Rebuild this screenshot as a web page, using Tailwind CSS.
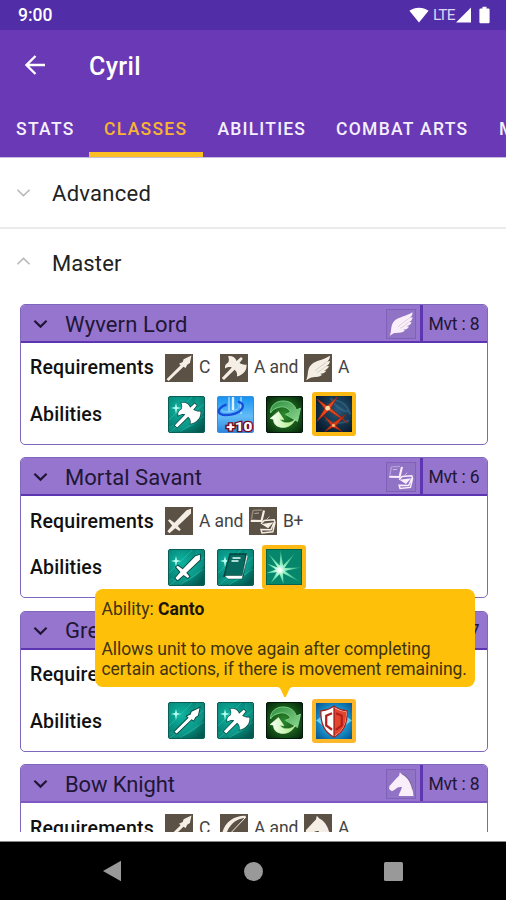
<!DOCTYPE html>
<html lang="en">
<head>
<meta charset="utf-8">
<title>Cyril</title>
<script src="https://cdn.jsdelivr.net/npm/@tailwindcss/browser@4"></script>
</head>
<body class="w-[506px] h-[900px] overflow-hidden bg-white font-['Roboto',sans-serif] text-[#151515]">
<svg class="absolute h-0 w-0">
  <defs>
    <radialGradient id="teal" cx=".35" cy=".35" r=".8"><stop offset="0" stop-color="#0fb5a0"/><stop offset=".6" stop-color="#07897c"/><stop offset="1" stop-color="#045950"/></radialGradient>
    <radialGradient id="green" cx=".5" cy=".5" r=".7"><stop offset="0" stop-color="#2c8a2c"/><stop offset=".6" stop-color="#155218"/><stop offset="1" stop-color="#04200a"/></radialGradient>
    <linearGradient id="blue" x1="0" y1="0" x2="0" y2="1"><stop offset="0" stop-color="#1592f2"/><stop offset=".55" stop-color="#63bcf8"/><stop offset="1" stop-color="#2c85dc"/></linearGradient>
    <radialGradient id="navy" cx=".6" cy=".4" r=".7"><stop offset="0" stop-color="#275878"/><stop offset="1" stop-color="#071a2e"/></radialGradient>
    <radialGradient id="cyan" cx=".5" cy=".5" r=".65"><stop offset="0" stop-color="#5bd8ff"/><stop offset=".65" stop-color="#1489c4"/><stop offset="1" stop-color="#0a5a94"/></radialGradient>
    <radialGradient id="glow" cx=".38" cy=".58" r=".6"><stop offset="0" stop-color="#ffffff"/><stop offset=".3" stop-color="#8df0c0"/><stop offset="1" stop-color="#23a980"/></radialGradient>
    <linearGradient id="arrowA" x1="0" y1="0" x2="1" y2="1"><stop offset="0" stop-color="#2d8c3c"/><stop offset="1" stop-color="#8fd893"/></linearGradient>
    <linearGradient id="arrowB" x1="0" y1="0" x2="1" y2="0"><stop offset="0" stop-color="#ffffff"/><stop offset="1" stop-color="#a5ef79"/></linearGradient>
    <symbol id="lance" viewBox="0 0 28 28"><path d="M1.5 25.2 L15.6 11.2 L14 9.7 L17.7 7.9 L18.6 5.2 L26.5 1.4 L24.9 9 L22.2 10.7 L20.6 14 L18.5 12.7 L3.7 27 Z"/></symbol>
    <symbol id="axe" viewBox="0 0 28 28"><path d="M8 2.5 C12 1 15.5 3.5 16.5 7 L21 3 L22.8 4.8 L19.5 9 C22 10.5 24.5 11 26.5 10.5 C27 16 24 20.5 17 22.5 C17.5 19.5 16.5 17 14.6 15.8 L4 26 L1.8 24 L11.8 13.4 C10 12.6 8 12.8 5 14.5 C4.8 11.5 5.5 10 8 8.8 C9.4 7 9 4 8 2.5 Z"/></symbol>
    <symbol id="wing" viewBox="0 0 28 28"><path d="M2.2 26.3 C4.8 21 2.6 14.8 7.5 10.4 C12 6.5 19 6.2 25.8 1.8 C26.2 4 25.3 6 23.2 7.5 L26 7 C25.8 9.8 24.2 11.3 21.8 12.2 L25 12 C24.2 14.7 22 16 19.8 16.4 L22.3 16.8 C21 19 18.5 20 16.3 19.8 L18 21 C14.5 23.8 9.8 22.6 6.5 23.7 C5 24.3 3.7 25.4 2.2 26.3 Z"/><path d="M11 17 C15 13 19 11 23 7.6 M13 18.5 C16 17 19 15 21.6 12.3" fill="none" stroke="#62564a" stroke-width=".6" opacity=".35"/></symbol>
    <symbol id="sword" viewBox="0 0 28 28"><path d="M26 1.8 L26 6.5 L12.8 19 L15.8 22.6 L14.3 24.1 L10.2 21.2 L4.5 26.3 L2.3 24.2 L7.2 18.4 L3 13.6 L4.6 12.2 L9.4 15.8 L21.6 3.2 Z"/></symbol>
    <symbol id="books" viewBox="0 0 28 28"><g fill="none" stroke="currentColor" stroke-width="1.5"><path d="M4 3.5 L13 3 M4 3.5 L2.5 12" stroke-opacity=".35"/><path d="M1.8 13.8 L12.5 14 L15 3.5" stroke-width="2.2"/><path d="M12 16.8 L15.2 13.5 L25.2 12.8 L26 15.5 L23.8 24.8 L13 26 L12 22.5 L22 22.8 L25 15.5"/><path d="M14.5 17.4 L22.5 16.3 L19 20.3 Z" fill="currentColor"/><path d="M5.5 6.5 L10 6 M17.5 12.5 L20.5 9.5" stroke-width="1" stroke-opacity=".6"/></g></symbol>
    <symbol id="bow" viewBox="0 0 28 28"><path d="M26 3 L4 26" fill="none" stroke="currentColor" stroke-width="1"/><path d="M1.5 26 C1.2 12 11 1.5 25.5 1.8 L26 3.8 C15 4.8 7 12 4.8 26 Z"/></symbol>
    <symbol id="horse" viewBox="0 0 28 28"><path d="M12 5.5 L12.8 1.8 L15.3 4.5 C21 7 24 13 26 20 L27 26.5 L11.5 26.5 C12.4 22.8 14.2 20.8 15 17.2 C12 16.8 10 17.6 8.2 19.5 L4.6 21.4 L1.6 19.2 L2 16 C5 13 7.7 9.6 12 5.5 Z"/><path d="M16.5 4 C22 7.5 24.5 13 26 20" fill="none" stroke="#6b5b62" stroke-width=".8" opacity=".7"/></symbol>
    <symbol id="tealBase" viewBox="0 0 37 37"><rect x=".5" y=".5" width="36" height="36" rx="1.5" fill="url(#teal)" stroke="#075f57"/><path d="M1 30 C16 27 27 14 28 1 L36 1 L36 16 C31 27 20 34 8 36 L1 36 Z" fill="#19c5ad" opacity=".3"/><path d="M2 36 L36 8 M12 36 L36 20 M1 24 L24 1" stroke="#50e3cf" stroke-width="1" opacity=".3"/><path d="M8 7 L9 11 L13 12 L9 13 L8 18 L7 13 L3 12 L7 11 Z" fill="#b9fff2"/></symbol>
    <symbol id="aAxe" viewBox="0 0 37 37"><use href="#tealBase"/><use href="#axe" x="5" y="4" width="29" height="30" fill="#fff" stroke="#064b45" stroke-width="1.4" paint-order="stroke"/></symbol>
    <symbol id="aLance" viewBox="0 0 37 37"><use href="#tealBase"/><use href="#lance" x="5" y="4" width="28" height="29" fill="#fff" stroke="#064b45" stroke-width="1.8" paint-order="stroke"/></symbol>
    <symbol id="aSword" viewBox="0 0 37 37"><use href="#tealBase"/><use href="#sword" x="5" y="4" width="29" height="29" fill="#fff" stroke="#064b45" stroke-width="1.8" paint-order="stroke"/></symbol>
    <symbol id="aBook" viewBox="0 0 37 37"><use href="#tealBase"/><path d="M13 5 L29 5 L26 27 L7 27 Z" fill="#08695f" stroke="#03443e" stroke-width="1.4"/><path d="M8 27.5 L11 30 L25 30 L31 7 L29.5 5.5 L25.2 26.5 L9 26.5 Z" fill="#fff" stroke="#03443e" stroke-width=".5"/><path d="M15.5 9 H23.5 M14.5 12 H21.5" stroke="#e6fffa" stroke-width="1.7"/></symbol>
    <symbol id="aUp" viewBox="0 0 37 37"><rect x=".5" y=".5" width="36" height="36" rx="1.5" fill="url(#blue)" stroke="#3a8fdb"/><path d="M12 1 V16 M24 1 V18" stroke="#d9f2ff" stroke-width="2" opacity=".5"/><path d="M16 1 V14" stroke="#fff" stroke-width="2.4" opacity=".85"/><path d="M21 5.6 C30 7.5 26 16.5 14 18.6 C5 20 -1 17.5 3 12.5 C4.5 10.5 7 9.3 9.5 8.5" fill="none" stroke="#154fdc" stroke-width="2.4"/><path d="M20 7.8 C24.5 9 22 14 14 15.5 C8 16.5 4 15.5 5 13" fill="none" stroke="#88d0ff" stroke-width="1"/><text x="9.5" y="34.5" font-size="13" font-weight="900" fill="#fff" stroke="#780b1c" stroke-width="2.6" paint-order="stroke" textLength="26" lengthAdjust="spacingAndGlyphs">+10</text></symbol>
    <symbol id="aCanto" viewBox="0 0 37 37"><rect x=".5" y=".5" width="36" height="36" rx="1.5" fill="url(#green)" stroke="#03180a"/><path d="M4.5 17 C4 9 11 4.5 18 5 C25 5.4 29 9 30.2 14 L34.5 12.2 L31.5 25.5 L19.5 18.3 L24.6 16.2 C22 11.5 17.5 9.8 12.5 11.4 C9 12.3 6 14.2 4.5 17 Z" fill="url(#arrowA)" stroke="#7ed78a" stroke-width=".9"/><path d="M4 22.5 L12.5 15.5 L18 23.8 L13.7 23.2 C16.7 27.5 23 28.4 29 23.7 C25.5 31 17 33.8 10.2 29.5 C8.5 28 7.5 26 7.3 23.2 Z" fill="url(#arrowB)" stroke="#e5ffd8" stroke-width=".5"/></symbol>
    <symbol id="aCross" viewBox="0 0 37 37"><rect width="37" height="37" fill="url(#navy)"/><path d="M17 4 C27 5 33 11 35 19 M10 24 C17 28 26 29 34 25 M15 2 C20 11 27 16 35 16" fill="none" stroke="#3b7395" stroke-width="2" opacity=".5"/><path d="M1 3 L11.5 10.2 L22 1 L15 12.5 L33 28 L13 15 L1 26 L9 13 Z" fill="#e84a1c" stroke="#9c2412" stroke-width=".8"/><path d="M8 20 L17.5 28 L31 18.5 L20.5 30.5 L27 36.5 L17.5 32 L9 36.5 L15.3 30 Z" fill="#dc3915" stroke="#83200f" stroke-width=".7"/><circle cx="12" cy="12.5" r="2.4" fill="#ffd8a0"/><circle cx="18" cy="30.2" r="1.6" fill="#ffb070"/></symbol>
    <symbol id="aStar" viewBox="0 0 37 37"><rect width="37" height="37" fill="#06866a"/><path d="M0 0 H37 V37 H0 Z" fill="none" stroke="#056450" stroke-width="2"/><path d="M12 19 L2 4 L14 17 L15 1 L17.5 17 L30 4 L19 19.5 L36 19 L19.5 22.5 L35 34 L17.5 25 L18 36 L14 26 L5 35 L11 24 L0 25 L10 21 L1 15 Z" fill="url(#glow)"/><circle cx="14.5" cy="22" r="2.5" fill="#fff" opacity=".75"/></symbol>
    <symbol id="aShield" viewBox="0 0 37 37"><rect width="37" height="37" fill="url(#cyan)"/><path d="M0 18 L8 12 V24 Z M37 18 L29 12 V24 Z" fill="#8cecff" opacity=".7"/><path d="M18.5 3 C21.5 5.5 26 7.4 32 8 C32.5 21 29 30 18.5 35 C8 30 4.5 21 5 8 C11 7.4 15.5 5.5 18.5 3 Z" fill="#fff" stroke="#a2231f" stroke-width="1.3"/><path d="M18.5 4.5 C21.5 6.5 26 8.4 31 9 C31.3 21 28 29 18.5 34 Z" fill="#e6452d"/><path d="M16.5 10.5 L10.5 13 V23 L16.5 27.5 M20.5 10.5 L26.5 13 V23 L20.5 27.5" fill="none" stroke="#b3201b" stroke-width="2.3"/><path d="M18.5 4 V34" stroke="#8c1714" stroke-width="1.2"/></symbol>
    <symbol id="chev" viewBox="0 0 16 10"><path d="M1.5 1.5 L8 7.8 L14.5 1.5" fill="none" stroke="currentColor"/></symbol>
  </defs>
</svg>

<div class="flex h-full w-full flex-col">
  <header class="shrink-0">
    <div class="flex h-[30px] items-center bg-[#512da8] pl-[18px] pr-[16px] text-white">
      <span class="mt-px text-[17.5px] leading-none font-medium">9:00</span>
      <svg class="ml-auto h-[16px] w-[20px]" viewBox="0 0 20 16"><path d="M.4 3.8 C6 -.4 14 -.4 19.6 3.8 L10 15.6 Z" fill="#fff"/></svg>
      <span class="ml-[4px] mt-px w-[23px] text-[15.5px] leading-none tracking-[-0.9px] text-[#ddd3f5]">LTE</span>
      <svg class="h-[16px] w-[15px]" viewBox="0 0 15 16"><path d="M15 .5 V15.5 H0 Z" fill="#fff"/></svg>
      <svg class="ml-[8px] h-[18px] w-[11px]" viewBox="0 0 11 18"><path d="M3.5 .8 H7.5 V2.5 H9.5 Q10.6 2.5 10.6 3.8 V16 Q10.6 17.2 9.5 17.2 H1.5 Q.4 17.2 .4 16 V3.8 Q.4 2.5 1.5 2.5 H3.5 Z" fill="#fff"/></svg>
    </div>
    <div class="bg-[#6a39b5] text-white">
      <div class="flex h-[71px] items-center pl-[25px]">
        <svg class="mt-[-2px] h-[20px] w-[20px]" viewBox="0 0 20 20"><path d="M20 10 H2 M10.5 1 L1.5 10 L10.5 19" fill="none" stroke="#fff" stroke-width="2.3"/></svg>
        <h1 class="ml-[44px] mt-px text-[25px] leading-none font-medium tracking-[0.4px]">Cyril</h1>
      </div>
      <nav class="flex h-[56px] overflow-hidden text-[17.5px] leading-[56px] font-medium tracking-[1.3px] whitespace-nowrap text-[#f5effd]">
        <span class="w-[89px] shrink-0 pl-[16px]">STATS</span>
        <span class="w-[113.5px] shrink-0 border-b-[5px] border-[#fbbf24] pl-[15px] text-[#f7b531]">CLASSES</span>
        <span class="w-[118.5px] shrink-0 pl-[15px] tracking-[1.2px]">ABILITIES</span>
        <span class="w-[163px] shrink-0 pl-[15px]">COMBAT ARTS</span>
        <span class="w-[80px] shrink-0 pl-[15px]">M</span>
      </nav>
    </div>
  </header>

  <main class="relative h-[675px] shrink-0 overflow-hidden border-t border-[#c9bddf]">
    <div class="flex h-[71px] items-center border-b-2 border-[#ebebeb] pb-px pl-[16px]">
      <svg class="mt-[2px] h-[10px] w-[15px] text-[#b8b8b8]" stroke-width="1.7"><use href="#chev"/></svg>
      <span class="ml-[21px] mt-[4px] text-[22px] leading-none tracking-[0.28px] text-[#222]">Advanced</span>
    </div>
    <div class="flex h-[75px] items-center pl-[16px]">
      <svg class="mt-[-11px] h-[10px] w-[15px] rotate-180 text-[#b8b8b8]" stroke-width="1.7"><use href="#chev"/></svg>
      <span class="ml-[21px] mt-[-5px] text-[22px] leading-none tracking-[0.1px] text-[#222]">Master</span>
    </div>

    <div class="flex flex-col gap-[12.4px] pr-[18.5px] pl-[20px]">
      <section class="h-[141px] shrink-0 overflow-hidden rounded-[5px] border-[1.5px] border-[#7e67bd]">
        <div class="flex h-[38px] items-center border-b-2 border-[#5e35b1] bg-[#9575cd] pl-[12px] text-[#211636]">
          <svg class="mt-[2px] h-[10px] w-[15px]" stroke-width="2.3"><use href="#chev"/></svg>
          <h2 class="mt-[3px] ml-[17px] text-[22px] leading-none tracking-[0.12px]">Wyvern Lord</h2>
          <svg class="ml-auto mt-px h-[30px] w-[30px] border border-[#8060b8] bg-[#9073c4] p-[0.5px]" fill="#fbeefb"><use href="#wing"/></svg>
          <span class="ml-[4px] h-full w-[3px] bg-[#5e35b1]"></span>
          <span class="mt-[2px] w-[64px] pl-[6px] text-[17.5px] tracking-[-0.2px]">Mvt : 8</span>
        </div>
        <div class="flex h-[48px] items-center pt-px pl-[9px] text-[17.5px] text-[#444]">
          <b class="mt-px w-[135px] text-[19.5px] font-medium tracking-[0.2px] text-[#111]">Requirements</b>
          <svg class="h-[28px] w-[28px] bg-[#5c5145]" fill="#f5eee5"><use href="#lance"/></svg><span class="w-[27px] pl-[6px]">C</span>
          <svg class="h-[28px] w-[28px] bg-[#5c5145]" fill="#f5eee5"><use href="#axe"/></svg><span class="w-[56px] pl-[6px] tracking-[-0.1px]">A and</span>
          <svg class="h-[28px] w-[28px] bg-[#5c5145]" fill="#f5eee5"><use href="#wing"/></svg><span class="pl-[6px]">A</span>
        </div>
        <div class="flex h-[46px] items-center pl-[9px]">
          <b class="mt-px w-[138px] text-[19.5px] font-medium tracking-[0.15px] text-[#111]">Abilities</b>
          <div class="flex items-center gap-[12.2px]">
            <svg class="h-[37px] w-[37px]"><use href="#aAxe"/></svg>
            <svg class="h-[37px] w-[37px]"><use href="#aUp"/></svg>
            <svg class="h-[37px] w-[37px]"><use href="#aCanto"/></svg>
            <span class="-m-[4px] rounded-[3px] bg-[#fdb913] p-[4px]"><svg class="h-[36px] w-[36px]"><use href="#aCross"/></svg></span>
          </div>
        </div>
      </section>

      <section class="h-[141px] shrink-0 overflow-hidden rounded-[5px] border-[1.5px] border-[#7e67bd]">
        <div class="flex h-[38px] items-center border-b-2 border-[#5e35b1] bg-[#9575cd] pl-[12px] text-[#211636]">
          <svg class="mt-[2px] h-[10px] w-[15px]" stroke-width="2.3"><use href="#chev"/></svg>
          <h2 class="mt-[3px] ml-[17px] text-[22px] leading-none tracking-[0.05px]">Mortal Savant</h2>
          <svg class="ml-auto mt-px h-[30px] w-[30px] border border-[#8060b8] bg-[#9073c4] p-[0.5px] text-[#fbeefb]" fill="#fbeefb"><use href="#books"/></svg>
          <span class="ml-[4px] h-full w-[3px] bg-[#5e35b1]"></span>
          <span class="mt-[2px] w-[64px] pl-[6px] text-[17.5px] tracking-[-0.2px]">Mvt : 6</span>
        </div>
        <div class="flex h-[48px] items-center pt-px pl-[9px] text-[17.5px] text-[#444]">
          <b class="mt-px w-[135px] text-[19.5px] font-medium tracking-[0.2px] text-[#111]">Requirements</b>
          <svg class="h-[28px] w-[28px] bg-[#5c5145]" fill="#f5eee5"><use href="#sword"/></svg><span class="w-[56px] pl-[6px] tracking-[-0.1px]">A and</span>
          <svg class="h-[28px] w-[28px] bg-[#5c5145] text-[#f5eee5]"><use href="#books"/></svg><span class="pl-[6px] tracking-[-0.5px]">B+</span>
        </div>
        <div class="flex h-[46px] items-center pl-[9px]">
          <b class="mt-px w-[138px] text-[19.5px] font-medium tracking-[0.15px] text-[#111]">Abilities</b>
          <div class="flex items-center gap-[12.2px]">
            <svg class="h-[37px] w-[37px]"><use href="#aSword"/></svg>
            <svg class="h-[37px] w-[37px]"><use href="#aBook"/></svg>
            <span class="-m-[4px] rounded-[3px] bg-[#fdb913] p-[4px]"><svg class="h-[36px] w-[36px]"><use href="#aStar"/></svg></span>
          </div>
        </div>
      </section>

      <section class="relative h-[141px] shrink-0 rounded-[5px] border-[1.5px] border-[#7e67bd]">
        <div class="flex h-[38px] items-center rounded-t-[3px] border-b-2 border-[#5e35b1] bg-[#9575cd] pl-[12px] text-[#211636]">
          <svg class="mt-[2px] h-[10px] w-[15px]" stroke-width="2.3"><use href="#chev"/></svg>
          <h2 class="mt-[3px] ml-[17px] text-[22px] leading-none tracking-[0.12px]">Great Knight</h2>
          <svg class="ml-auto mt-px h-[30px] w-[30px] border border-[#8060b8] bg-[#9073c4] p-[0.5px]" fill="#fbeefb"><use href="#horse"/></svg>
          <span class="ml-[4px] h-full w-[3px] bg-[#5e35b1]"></span>
          <span class="mt-[2px] w-[64px] pl-[6px] text-[17.5px] tracking-[-0.2px]">Mvt : 7</span>
        </div>
        <div class="flex h-[48px] items-center pt-px pl-[9px]">
          <b class="mt-px w-[135px] text-[19.5px] font-medium tracking-[0.2px] text-[#111]">Requirements</b>
        </div>
        <div class="flex h-[46px] items-center pl-[9px]">
          <b class="mt-px w-[138px] text-[19.5px] font-medium tracking-[0.15px] text-[#111]">Abilities</b>
          <div class="flex items-center gap-[12.2px]">
            <svg class="h-[37px] w-[37px]"><use href="#aLance"/></svg>
            <svg class="h-[37px] w-[37px]"><use href="#aAxe"/></svg>
            <svg class="h-[37px] w-[37px]"><use href="#aCanto"/></svg>
            <span class="-m-[4px] rounded-[3px] bg-[#fdb72b] p-[4px]"><svg class="h-[36px] w-[36px]"><use href="#aShield"/></svg></span>
          </div>
        </div>
        <div class="absolute top-[-23px] left-[73.5px] h-[98.5px] w-[380.5px] rounded-[8px] bg-[#ffc009] pt-[10px] pl-[7px] text-[17.5px] leading-[20.3px] whitespace-nowrap text-[#40340c]">
          <p>Ability: <b class="font-bold text-[#1c1503]">Canto</b></p>
          <p class="mt-[20px] tracking-[-0.08px]">Allows unit to move again after completing</p>
          <p class="tracking-[-0.08px]">certain actions, if there is movement remaining.</p>
          <svg class="absolute top-[98px] left-[182px] h-[11px] w-[16px]" viewBox="0 0 16 11"><path d="M0 0 H16 Q13 0 12 3 L9 9.5 Q8 11 7 9.5 L4 3 Q3 0 0 0 Z" fill="#ffc009"/></svg>
        </div>
      </section>

      <section class="h-[141px] shrink-0 overflow-hidden rounded-[5px] border-[1.5px] border-[#7e67bd]">
        <div class="flex h-[38px] items-center border-b-2 border-[#7e57c2] bg-[#9575cd] pl-[12px] text-[#211636]">
          <svg class="mt-[2px] h-[10px] w-[15px]" stroke-width="2.3"><use href="#chev"/></svg>
          <h2 class="mt-[3px] ml-[17px] text-[22px] leading-none tracking-[-0.1px]">Bow Knight</h2>
          <svg class="ml-auto mt-px h-[30px] w-[30px] border border-[#8060b8] bg-[#9073c4] p-[0.5px]" fill="#fbeefb"><use href="#horse"/></svg>
          <span class="ml-[4px] h-full w-[3px] bg-[#5e35b1]"></span>
          <span class="mt-[2px] w-[64px] pl-[6px] text-[17.5px] tracking-[-0.2px]">Mvt : 8</span>
        </div>
        <div class="flex h-[48px] items-center pt-px pl-[9px] text-[17.5px] text-[#444]">
          <b class="mt-px w-[135px] text-[19.5px] font-medium tracking-[0.2px] text-[#111]">Requirements</b>
          <svg class="h-[28px] w-[28px] bg-[#5c5145]" fill="#f5eee5"><use href="#lance"/></svg><span class="w-[27px] pl-[6px]">C</span>
          <svg class="h-[28px] w-[28px] bg-[#5c5145] text-[#f5eee5]" fill="#f5eee5"><use href="#bow"/></svg><span class="w-[56px] pl-[6px] tracking-[-0.1px]">A and</span>
          <svg class="h-[28px] w-[28px] bg-[#5c5145]" fill="#f5eee5"><use href="#horse"/></svg><span class="pl-[6px]">A</span>
        </div>
      </section>
    </div>
  </main>

  <div class="h-[9px] shrink-0 bg-white"></div>
  <footer class="flex flex-1 items-center border-t-[1.5px] border-[#888] bg-black pl-[102px]">
    <svg class="h-[22px] w-[20px]" viewBox="0 0 20 22"><path d="M19 .8 V21.2 L1 11 Z" fill="#999"/></svg>
    <span class="ml-[122px] h-[19px] w-[19px] rounded-full bg-[#999]"></span>
    <span class="ml-[121px] h-[19px] w-[19px] rounded-[1.5px] bg-[#999]"></span>
  </footer>
</div>
</body>
</html>
